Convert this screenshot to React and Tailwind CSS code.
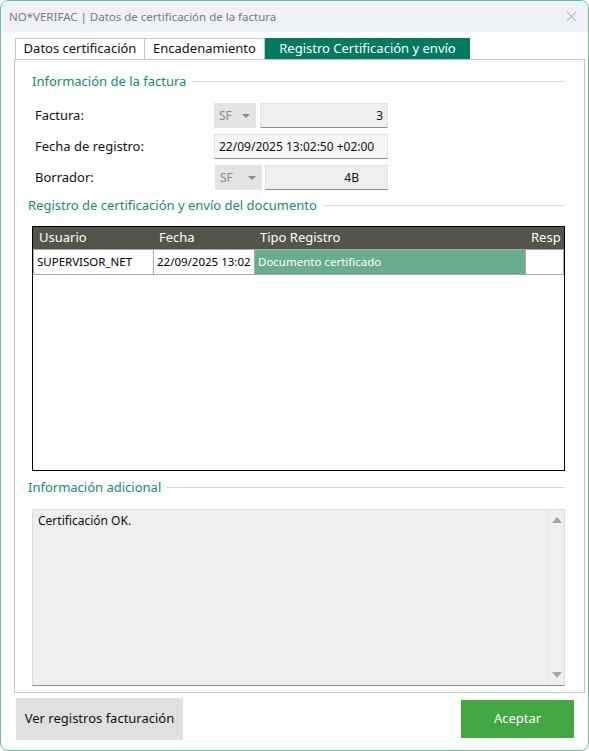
import { X } from "lucide-react";

const font = { fontFamily: '"Noto Sans", "Liberation Sans", sans-serif' };

const SectionTitle = ({ children, className = "" }) => (
  <div className={`flex items-center gap-[6px] ${className}`}>
    <span className="text-[13px] leading-[18px] text-[#148a77] whitespace-nowrap">{children}</span>
    <div className="h-px flex-1 bg-[#d9d9d9]" />
  </div>
);

const SeriesSelect = ({ className = "" }) => (
  <div className={`flex h-[25px] items-center justify-between bg-[#e3e3e3] pl-[5px] pr-[6px] text-[12px] text-[#8a8a8a] ${className}`}>
    <span>SF</span>
    <span className="h-0 w-0 border-x-[4px] border-t-[4px] border-x-transparent border-t-[#8a8a8a]" />
  </div>
);

const ReadField = ({ children, className = "" }) => (
  <div className={`flex h-[25px] items-center border border-[#e2e2e2] border-b-[#8c8c8c] bg-[#efefef] px-[4px] text-[12px] text-[#111] ${className}`}>
    {children}
  </div>
);

const columns = [
  { name: "Usuario", w: "w-[120px]" },
  { name: "Fecha", w: "w-[101px]" },
  { name: "Tipo Registro", w: "w-[271px]" },
  { name: "Resp", w: "flex-1" },
];

export default function App() {
  return (
    <div
      style={font}
      className="flex h-[751px] w-[589px] flex-col overflow-hidden rounded-[8px] border border-[#6cbd98] bg-white"
    >
      {/* title bar */}
      <div className="flex h-[31px] shrink-0 items-center justify-between bg-[#eef1f5] pl-[8px] pr-[8px]">
        <span className="text-[11.5px] text-[#7a7a7a]">NO*VERIFAC | Datos de certificación de la factura</span>
        <X size={17} strokeWidth={1} className="text-[#8a8a8a]" />
      </div>

      <div className="flex flex-1 flex-col pl-[13px] pr-[3px] pt-[6px]">
        {/* tabs */}
        <div className="flex h-[21px] pl-[1px] text-[13px]">
          <div className="flex w-[130px] items-center justify-center border border-b-0 border-[#c6c6c6] text-[#111]">
            Datos certificación
          </div>
          <div className="flex w-[120px] items-center justify-center border border-b-0 border-l-0 border-[#c6c6c6] text-[#111]">
            Encadenamiento
          </div>
          <div className="flex w-[205px] items-center justify-center bg-[#007a5e] text-white">
            Registro Certificación y envío
          </div>
        </div>

        {/* tab panel */}
        <div className="flex h-[634px] flex-col border border-[#c6c6c6] pl-[13px] pr-[19px] pt-[12px]">
          <SectionTitle className="pl-[4px]">Información de la factura</SectionTitle>

          <div className="mt-[13px] flex flex-col gap-[6px] pl-[7px] text-[13px] text-[#111]">
            <div className="flex items-center">
              <span className="w-[179px]">Factura:</span>
              <SeriesSelect className="w-[42px]" />
              <ReadField className="ml-[4px] w-[128px] justify-end">3</ReadField>
            </div>
            <div className="flex items-center">
              <span className="w-[179px]">Fecha de registro:</span>
              <ReadField className="w-[174px] bg-[#f7f7f7]">22/09/2025 13:02:50 +02:00</ReadField>
            </div>
            <div className="flex items-center">
              <span className="w-[180px]">Borrador:</span>
              <SeriesSelect className="w-[47px]" />
              <ReadField className="ml-[3px] w-[123px] justify-end pr-[28px]">4B</ReadField>
            </div>
          </div>

          <SectionTitle className="mt-[6px]">Registro de certificación y envío del documento</SectionTitle>

          {/* records grid */}
          <div className="mt-[12px] ml-[4px] flex h-[245px] flex-col border border-black">
            <div className="flex h-[22px] shrink-0 items-center bg-[#54544b] text-[13px] text-white">
              {columns.map((c) => (
                <div key={c.name} className={`${c.w} overflow-hidden whitespace-nowrap pl-[6px]`}>
                  {c.name}
                </div>
              ))}
            </div>
            <div className="flex h-[26px] shrink-0 text-[11.5px]">
              <div className="flex w-[120px] items-center border border-r-0 border-[#a9a9a9] bg-white pl-[3px] text-black">
                SUPERVISOR_NET
              </div>
              <div className="flex w-[101px] items-center border border-r-0 border-[#a9a9a9] bg-white pl-[3px] text-black">
                22/09/2025 13:02
              </div>
              <div className="flex w-[271px] items-center border border-r-0 border-[#a9a9a9] bg-[#68ae8d] pl-[3px] text-white">
                Documento certificado
              </div>
              <div className="flex-1 border border-[#a9a9a9] bg-white" />
            </div>
          </div>

          <SectionTitle className="mt-[7px]">Información adicional</SectionTitle>

          {/* notes box */}
          <div className="mt-[13px] ml-[4px] flex h-[177px] border border-[#dcdcdc] border-b-[#8c8c8c] bg-[#efefef]">
            <div className="flex-1 px-[5px] pt-[2px] text-[12px] text-[#111]">Certificación OK.</div>
            <div className="flex w-[16px] flex-col items-center justify-between border-l border-[#e2e2e2] py-[7px]">
              <span className="h-0 w-0 border-x-[5px] border-b-[6px] border-x-transparent border-b-[#a6a6a6]" />
              <span className="h-0 w-0 border-x-[5px] border-t-[6px] border-x-transparent border-t-[#a6a6a6]" />
            </div>
          </div>
        </div>

        {/* footer buttons */}
        <div className="flex items-center justify-between pl-[2px] pr-[11px] pt-[5px]">
          <button className="h-[42px] w-[167px] bg-[#e0e0e0] text-[13px] text-[#111]">Ver registros facturación</button>
          <button className="h-[38px] w-[113px] bg-[#43a843] text-[13px] text-white">Aceptar</button>
        </div>
      </div>
    </div>
  );
}
